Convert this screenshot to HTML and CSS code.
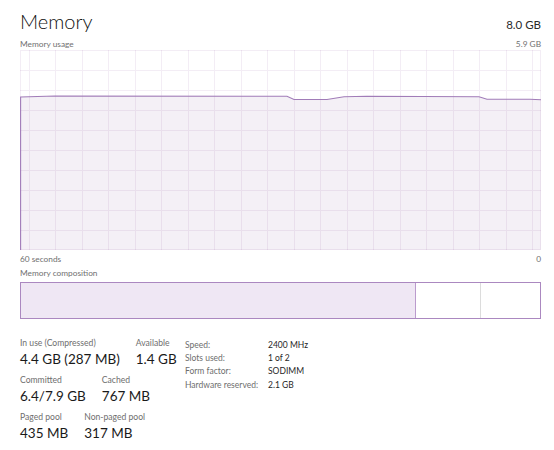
FILE: index.html
```html
<!DOCTYPE html>
<html lang="en">
<head>
<meta charset="utf-8">
<title>Memory</title>
<link rel="stylesheet" href="styles.css">
</head>
<body>
<div class="page">
  <div class="header">
    <h1 class="title">Memory</h1>
    <span class="total">8.0 GB</span>
  </div>
  <div class="caption-row caption-top">
    <span>Memory usage</span>
    <span>5.9 GB</span>
  </div>
  <svg class="graph" viewBox="0 0 521 200" width="521" height="200" preserveAspectRatio="none">
    <path class="fill" d="M0,200 L0,47 L35,46 L267,46.3 L274,49.5 L307,49.5 L324,46.7 L347,46.2 L459,46.7 L467,49.3 L510,49.3 L521,49.8 L521,200 Z"/>
    <path class="grid" d="M9.5,0V200 M35.5,0V200 M62.5,0V200 M88.5,0V200 M115.5,0V200 M141.5,0V200 M168.5,0V200 M194.5,0V200 M221.5,0V200 M247.5,0V200 M274.5,0V200 M300.5,0V200 M327.5,0V200 M353.5,0V200 M380.5,0V200 M406.5,0V200 M433.5,0V200 M459.5,0V200 M486.5,0V200 M512.5,0V200 M0,20.5H521 M0,40.5H521 M0,60.5H521 M0,80.5H521 M0,100.5H521 M0,120.5H521 M0,140.5H521 M0,160.5H521 M0,180.5H521"/>
    <rect class="frame" x="0.5" y="0.5" width="520" height="199"/>
    <path class="usage" d="M0.6,200 L0.6,47 L35,46 L267,46.3 L274,49.5 L307,49.5 L324,46.7 L347,46.2 L459,46.7 L467,49.3 L510,49.3 L521,49.8"/>
  </svg>
  <div class="caption-row caption-axis">
    <span>60 seconds</span>
    <span>0</span>
  </div>
  <div class="caption-row caption-comp">
    <span>Memory composition</span>
  </div>
  <div class="comp-bar">
    <div class="seg seg-inuse"></div>
    <div class="seg seg-modified"></div>
    <div class="seg seg-standby"></div>
  </div>
  <div class="stats">
    <div class="stat-grid">
      <div class="stat-row">
        <div class="stat"><div class="label">In use (Compressed)</div><div class="value">4.4 GB (287 MB)</div></div>
        <div class="stat"><div class="label">Available</div><div class="value">1.4 GB</div></div>
      </div>
      <div class="stat-row">
        <div class="stat"><div class="label">Committed</div><div class="value">6.4/7.9 GB</div></div>
        <div class="stat"><div class="label">Cached</div><div class="value">767 MB</div></div>
      </div>
      <div class="stat-row">
        <div class="stat"><div class="label">Paged pool</div><div class="value">435 MB</div></div>
        <div class="stat"><div class="label">Non-paged pool</div><div class="value">317 MB</div></div>
      </div>
    </div>
    <dl class="specs">
      <dt>Speed:</dt><dd>2400 MHz</dd>
      <dt>Slots used:</dt><dd>1 of 2</dd>
      <dt>Form factor:</dt><dd>SODIMM</dd>
      <dt>Hardware reserved:</dt><dd>2.1 GB</dd>
    </dl>
  </div>
</div>
</body>
</html>
```

FILE: styles.css
```css
html, body {
  margin: 0;
  padding: 0;
  background: #ffffff;
}

body {
  font-family: "Lato", "Open Sans", "Liberation Sans", sans-serif;
  color: #1c1c1c;
}

.page {
  padding: 9px 13px 0 20px;
  width: 521px;
}

.header {
  display: flex;
  justify-content: space-between;
  align-items: baseline;
  height: 24px;
}

.title {
  margin: 0;
  font-size: 20px;
  line-height: 24px;
  font-weight: 300;
  color: #111111;
}

.total {
  font-size: 11.5px;
  line-height: 14px;
  color: #2a2a2a;
}

.caption-row {
  display: flex;
  justify-content: space-between;
  font-size: 8.3px;
  line-height: 10px;
  color: #707070;
}

.caption-top {
  margin-top: 5.5px;
  margin-bottom: 1.5px;
}

.caption-axis {
  margin-top: 4px;
}

.caption-comp {
  margin-top: 3.5px;
  margin-bottom: 4px;
}

.graph {
  display: block;
  width: 521px;
  height: 200px;
}

.graph .fill {
  fill: #f4f0f6;
}

.graph .grid {
  fill: none;
  stroke: rgba(120, 60, 140, 0.09);
  stroke-width: 1;
  shape-rendering: crispEdges;
}

.graph .frame {
  fill: none;
  stroke: rgba(120, 60, 140, 0.09);
  stroke-width: 1;
  shape-rendering: crispEdges;
}

.graph .usage {
  fill: none;
  stroke: #a17cb8;
  stroke-width: 1.1;
}

.comp-bar {
  display: flex;
  height: 37px;
  box-sizing: border-box;
  border: 1px solid #ab88c0;
}

.seg {
  height: 100%;
  box-sizing: border-box;
}

.seg-inuse {
  width: 395px;
  background: #efe7f4;
  border-right: 1px solid #bb9bcd;
}

.seg-modified {
  width: 65px;
  background: #ffffff;
  border-right: 1px solid #dcdcdc;
}

.seg-standby {
  flex: 1;
  background: #ffffff;
}

.stats {
  display: flex;
  margin-top: 19px;
}

.stat-grid {
  width: 165px;
  display: flex;
  flex-direction: column;
}

.stat-row {
  display: flex;
  gap: 16px;
  height: 37px;
}

.label {
  font-size: 8.6px;
  line-height: 10px;
  color: #6e6e6e;
  white-space: nowrap;
}

.value {
  margin-top: 3px;
  font-size: 13.5px;
  line-height: 17px;
  color: #1a1a1a;
  white-space: nowrap;
}

.specs {
  margin: 0.5px 0 0 0;
  display: grid;
  grid-template-columns: 83px auto;
  grid-auto-rows: 13.33px;
  align-items: center;
  font-size: 8.5px;
  line-height: 10px;
}

.specs dt {
  color: #6e6e6e;
  white-space: nowrap;
}

.specs dd {
  margin: 0;
  color: #1f1f1f;
  white-space: nowrap;
}
```
